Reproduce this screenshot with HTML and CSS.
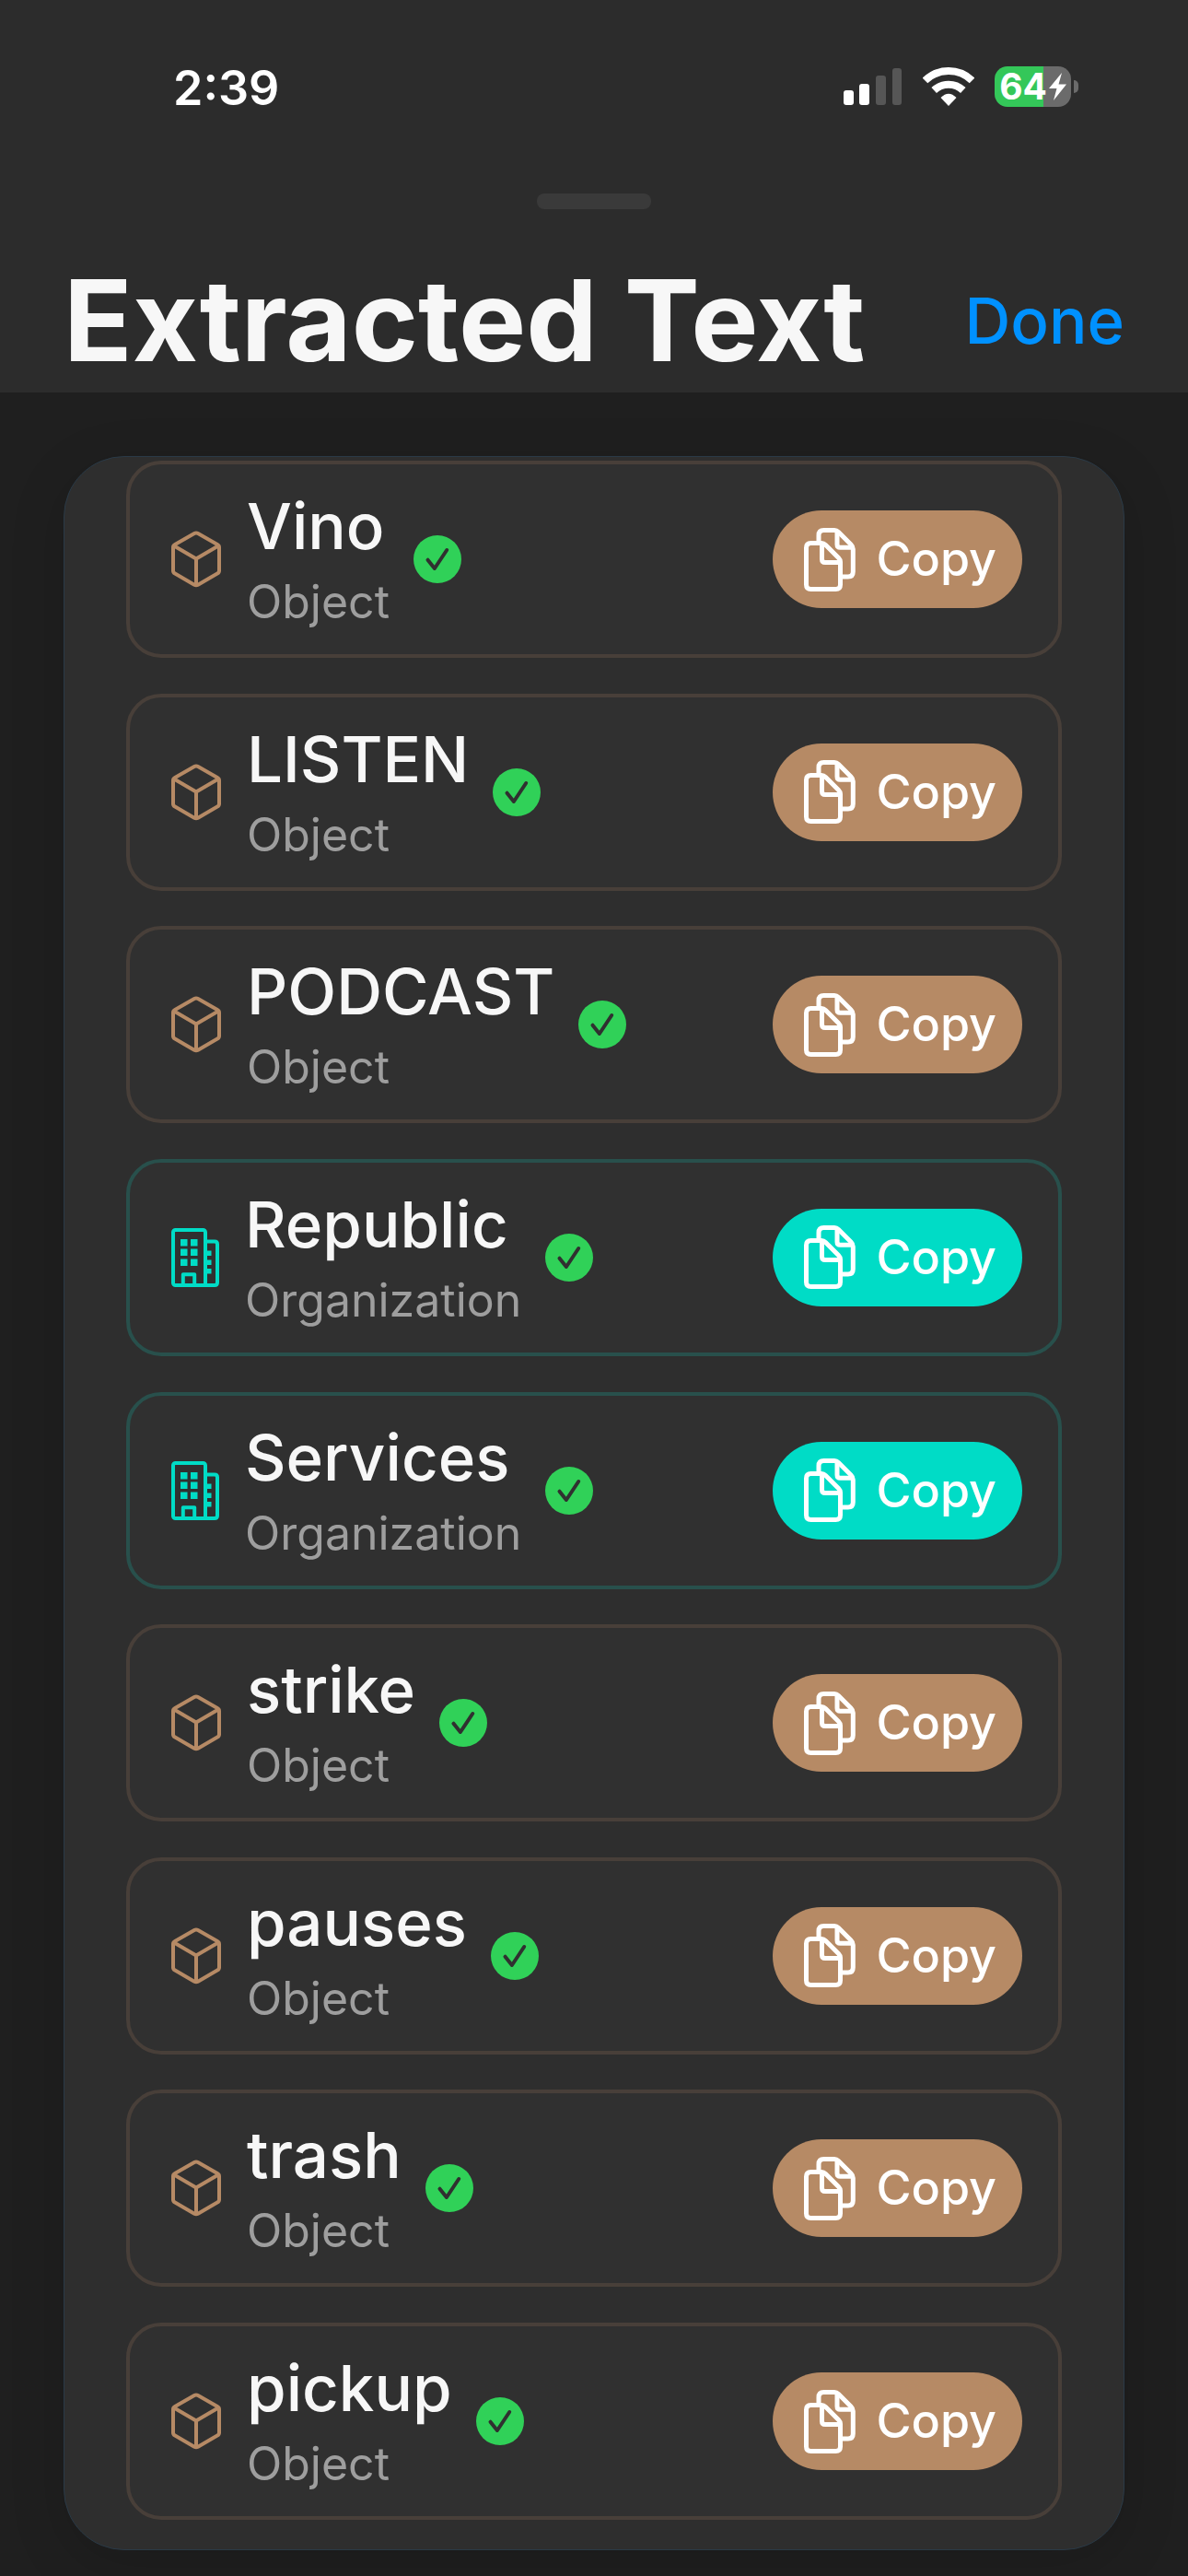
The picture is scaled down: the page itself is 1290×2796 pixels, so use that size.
FILE: index.html
```html
<!DOCTYPE html>
<html lang="en">
<head>
<meta charset="utf-8">
<meta name="viewport" content="width=device-width, initial-scale=1">
<title>Extracted Text</title>
<link rel="stylesheet" href="styles.css">
</head>
<body>
<svg class="sprite" aria-hidden="true">
  <symbol id="cube" viewBox="0 0 54 62">
    <path d="M25 3.1Q27 2 29 3.1L50 14.9Q52 16 52 18V43.500Q52 45.500 50 46.600L29 58.700Q27 59.800 25 58.700L4 46.600Q2 45.500 2 43.500V18Q2 16 4 14.900ZM3 16.500L27 30.500L51 16.500M27 30.500V59" fill="none" stroke="currentColor" stroke-width="4" stroke-linejoin="round"/>
  </symbol>
  <symbol id="building" viewBox="0 0 52 64">
    <g fill="none" stroke="currentColor" stroke-width="4">
      <rect x="2" y="2" width="35" height="60" rx="2.500"/>
      <path d="M37 14.500H47Q50 14.500 50 17.500V59Q50 62 47 62H35"/>
      <path d="M12.800 61V50.300H25.200V61" stroke-linejoin="round"/>
    </g>
    <path fill="currentColor" d="M10 12h7.500v7.500H10zM21 12h7.500v7.500H21zM10 22.500h7.500V30H10zM21 22.500h7.500V30H21zM10 33.500h7.500V41H10zM21 33.500h7.500V41H21zM38 24.500h5.500V30H38zM38 34.500h5.500V40H38zM38 44h5.500v5.500H38z"/>
  </symbol>
  <symbol id="verified" viewBox="0 0 52 52">
    <circle cx="26" cy="26" r="26" fill="#30d158"/>
    <path d="M15.500 26.700L22.900 36L36.200 16" fill="none" stroke="#303030" stroke-width="4" stroke-linecap="round" stroke-linejoin="round"/>
  </symbol>
  <symbol id="copy" viewBox="0 0 56 69">
    <g fill="none" stroke="currentColor" stroke-width="5" stroke-linejoin="round">
      <path d="M7.500 16.500H19Q21.500 16.500 23.500 18.500L37.500 32.500Q39.500 34.500 39.500 37V61.500Q39.500 66.500 34.500 66.500H7.500Q2.500 66.500 2.500 61.500V21.500Q2.500 16.500 7.500 16.500Z"/>
      <path d="M19.500 17V34Q19.500 37.500 23 37.500H39"/>
      <path d="M16 15V8Q16 2.500 21.500 2.500H33Q35.500 2.500 37.500 4.500L51 18Q53.300 20.300 53.300 23V47.500Q53.300 53 47.800 53H41"/>
      <path d="M36 3.500V18Q36 21.300 39.300 21.300H52"/>
    </g>
  </symbol>
</svg>

<header class="header">
  <div class="status">
    <time class="clock">2:39</time>
    <div class="indicators">
      <svg class="signal" viewBox="0 0 64 40" role="img" aria-label="Signal">
        <rect y="24" width="11" height="16" rx="3" fill="#fff"/>
        <rect x="17" y="17" width="11" height="23" rx="3" fill="#fff"/>
        <rect x="35" y="8" width="11" height="32" rx="3" fill="#565656"/>
        <rect x="53" width="10" height="40" rx="3" fill="#565656"/>
      </svg>
      <svg class="wifi" viewBox="0 0 56 42" role="img" aria-label="Wi-Fi">
        <path d="M2.500 14.500A36.500 36.500 0 0 1 53.500 14.500M12.200 25A22.800 22.800 0 0 1 43.800 25" fill="none" stroke="#fff" stroke-width="8"/>
        <path d="M28 42L19.500 33Q28 24.500 36.500 33Z" fill="#fff"/>
      </svg>
      <div class="battery">
        <div class="battery-body">
          <span>64</span>
          <svg class="bolt" viewBox="0 0 19 30" aria-hidden="true"><path d="M14 0L0 17H8.500L5 30L19 12.500H10.500Z" fill="#fff"/></svg>
        </div>
        <div class="battery-tip"></div>
      </div>
    </div>
  </div>
  <div class="grabber"></div>
  <div class="titlebar">
    <h1 class="title">Extracted Text</h1>
    <button class="done" type="button">Done</button>
  </div>
</header>

<main class="main">
  <ul class="panel">
    <li class="row object"><svg class="kind"><use href="#cube"/></svg><div class="label"><h2 class="name">Vino</h2><p class="type">Object</p></div><svg class="check"><use href="#verified"/></svg><button class="copy" type="button"><svg class="copy-icon"><use href="#copy"/></svg>Copy</button></li>
    <li class="row object"><svg class="kind"><use href="#cube"/></svg><div class="label"><h2 class="name">LISTEN</h2><p class="type">Object</p></div><svg class="check"><use href="#verified"/></svg><button class="copy" type="button"><svg class="copy-icon"><use href="#copy"/></svg>Copy</button></li>
    <li class="row object"><svg class="kind"><use href="#cube"/></svg><div class="label"><h2 class="name">PODCAST</h2><p class="type">Object</p></div><svg class="check"><use href="#verified"/></svg><button class="copy" type="button"><svg class="copy-icon"><use href="#copy"/></svg>Copy</button></li>
    <li class="row organization"><svg class="kind"><use href="#building"/></svg><div class="label"><h2 class="name">Republic</h2><p class="type">Organization</p></div><svg class="check"><use href="#verified"/></svg><button class="copy" type="button"><svg class="copy-icon"><use href="#copy"/></svg>Copy</button></li>
    <li class="row organization"><svg class="kind"><use href="#building"/></svg><div class="label"><h2 class="name">Services</h2><p class="type">Organization</p></div><svg class="check"><use href="#verified"/></svg><button class="copy" type="button"><svg class="copy-icon"><use href="#copy"/></svg>Copy</button></li>
    <li class="row object"><svg class="kind"><use href="#cube"/></svg><div class="label"><h2 class="name">strike</h2><p class="type">Object</p></div><svg class="check"><use href="#verified"/></svg><button class="copy" type="button"><svg class="copy-icon"><use href="#copy"/></svg>Copy</button></li>
    <li class="row object"><svg class="kind"><use href="#cube"/></svg><div class="label"><h2 class="name">pauses</h2><p class="type">Object</p></div><svg class="check"><use href="#verified"/></svg><button class="copy" type="button"><svg class="copy-icon"><use href="#copy"/></svg>Copy</button></li>
    <li class="row object"><svg class="kind"><use href="#cube"/></svg><div class="label"><h2 class="name">trash</h2><p class="type">Object</p></div><svg class="check"><use href="#verified"/></svg><button class="copy" type="button"><svg class="copy-icon"><use href="#copy"/></svg>Copy</button></li>
    <li class="row object"><svg class="kind"><use href="#cube"/></svg><div class="label"><h2 class="name">pickup</h2><p class="type">Object</p></div><svg class="check"><use href="#verified"/></svg><button class="copy" type="button"><svg class="copy-icon"><use href="#copy"/></svg>Copy</button></li>
  </ul>
</main>
</body>
</html>
```
FILE: styles.css
```css
* {
  box-sizing: border-box;
  margin: 0;
  padding: 0;
}

body {
  display: flex;
  flex-direction: column;
  min-height: 100vh;
  background: #1f1f1f;
  color: #f7f7f7;
  font-family: Inter, "Liberation Sans", sans-serif;
}

button {
  border: 0;
  background: none;
  font: inherit;
  cursor: pointer;
}

svg {
  flex: none;
}

.sprite {
  display: none;
}

/* Header */

.header {
  background: #2c2c2c;
}

.status {
  display: flex;
  align-items: center;
  justify-content: space-between;
  height: 188px;
  padding: 0 119px 0 188px;
  color: #fff;
}

.clock {
  padding-top: 4px;
  font-size: 52px;
  font-weight: 600;
  line-height: 64px;
}

.indicators {
  display: flex;
  align-items: center;
  gap: 22px;
}

.signal {
  width: 64px;
  height: 40px;
}

.wifi {
  width: 56px;
  height: 42px;
}

.battery {
  display: flex;
  align-items: center;
  gap: 3px;
}

.battery-body {
  display: flex;
  align-items: center;
  justify-content: center;
  gap: 2px;
  width: 83px;
  height: 44px;
  border-radius: 14px;
  background: linear-gradient(to right, #34c759 64%, #6b6b6b 64%);
  font-size: 39px;
  font-weight: 700;
  line-height: 44px;
}

.bolt {
  width: 19px;
  height: 30px;
}

.battery-tip {
  width: 5px;
  height: 14px;
  border-radius: 0 5px 5px 0;
  background: #6b6b6b;
}

.grabber {
  width: 124px;
  height: 17px;
  margin: 22px auto 43px;
  border-radius: 8px;
  background: #3a3a3a;
}

.titlebar {
  display: flex;
  align-items: center;
  justify-content: space-between;
  padding: 0 69px;
}

.title {
  font-size: 123px;
  font-weight: 700;
  line-height: 156px;
  white-space: nowrap;
}

.done {
  color: #0091ff;
  font-size: 69px;
  font-weight: 500;
  line-height: 84px;
}

/* List */

.main {
  display: flex;
  flex: 1;
  padding: 69px 69px 28px;
}

.panel {
  display: flex;
  flex: 1;
  flex-direction: column;
  justify-content: space-between;
  padding: 4px 67px 32px;
  border: 1px solid #2a3a47;
  border-radius: 66px;
  background: #2e2e2e;
  box-shadow: 0 15px 60px rgba(0, 0, 0, 0.15);
  list-style: none;
}

.row {
  display: flex;
  align-items: center;
  padding: 29px 39px 29px 45px;
  border: 4px solid #483f39;
  border-radius: 38px;
  background: #303030;
}

.organization {
  border-color: #28504c;
}

.kind {
  width: 54px;
  height: 62px;
  margin-right: 28px;
  color: #b68a65;
}

.organization .kind {
  width: 52px;
  height: 64px;
  color: #00dcc6;
}

.label {
  display: grid;
  gap: 16px;
}

.name {
  font-size: 69px;
  font-weight: 500;
  line-height: 76px;
}

.type {
  color: #9e9e9e;
  font-size: 50px;
  line-height: 56px;
}

.check {
  width: 52px;
  height: 52px;
  margin-left: 26px;
}

.copy {
  display: flex;
  align-items: center;
  gap: 22px;
  height: 106px;
  margin-left: auto;
  padding: 0 28px 0 34px;
  border-radius: 53px;
  background: #b68a65;
  color: #fff;
  font-size: 52px;
  font-weight: 500;
  line-height: 64px;
}

.organization .copy {
  background: #00dcc6;
}

.copy-icon {
  width: 56px;
  height: 69px;
}
```
